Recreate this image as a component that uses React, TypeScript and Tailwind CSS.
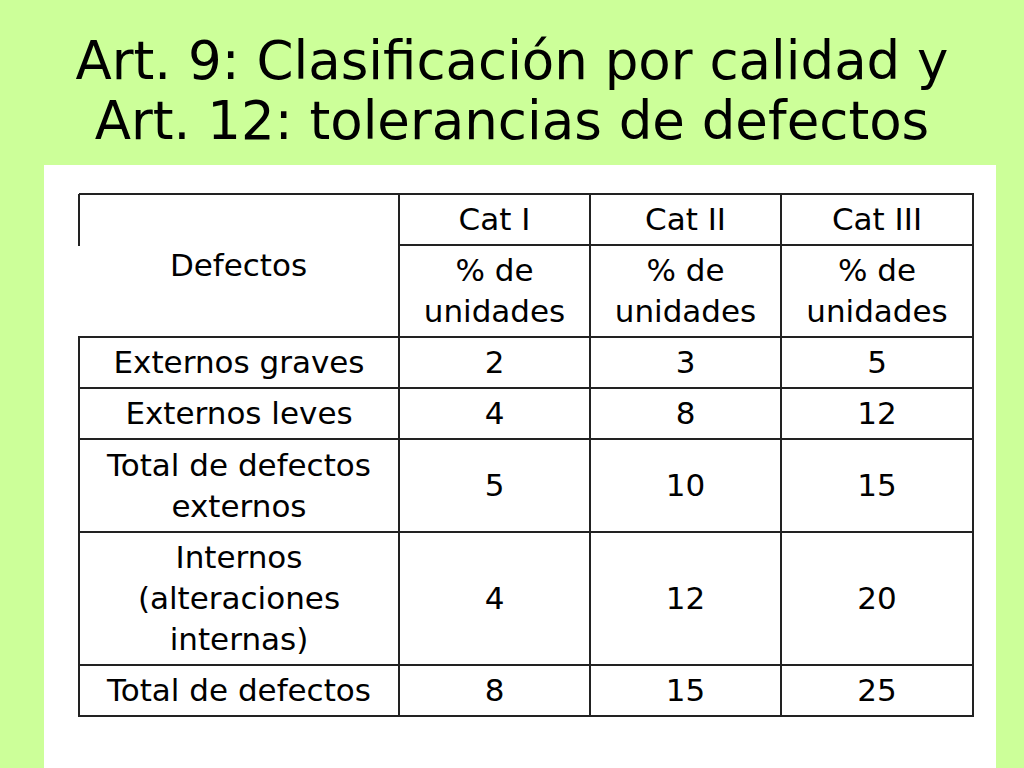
const rows = [
  { label: ["Externos graves"], values: ["2", "3", "5"], h: "h-[51px]" },
  { label: ["Externos leves"], values: ["4", "8", "12"], h: "h-[51px]" },
  { label: ["Total de defectos", "externos"], values: ["5", "10", "15"], h: "h-[93px]" },
  { label: ["Internos", "(alteraciones", "internas)"], values: ["4", "12", "20"], h: "h-[133px]" },
  { label: ["Total de defectos"], values: ["8", "15", "25"], h: "h-[51px]" },
];

const cell = "border-2 border-[#222] text-center align-middle p-0";

export default function App() {
  return (
    <div
      className="flex h-[768px] w-[1024px] flex-col bg-[#ccff99] text-black"
      style={{ fontFamily: '"DejaVu Sans", sans-serif' }}
    >
      <h1 className="flex h-[165px] flex-col items-center pt-[31px] text-[53px] leading-[60px]">
        <span>Art. 9: Clasificación por calidad y</span>
        <span>Art. 12: tolerancias de defectos</span>
      </h1>

      <div className="ml-[44px] w-[952px] flex-1 bg-white pl-[34px] pt-[28px]">
        <table className="w-[894px] table-fixed border-collapse text-[31px] leading-[41px]">
          <colgroup>
            <col className="w-[320px]" />
            <col className="w-[191px]" />
            <col className="w-[191px]" />
            <col className="w-[192px]" />
          </colgroup>
          <tbody>
            <tr className="h-[51px]">
              <td
                rowSpan={2}
                className="relative border-2 border-l-0 border-[#222] p-0 text-center align-middle"
              >
                <span className="absolute -left-[1px] -top-[1px] h-[52px] w-[2px] bg-[#222]" />
                Defectos
              </td>
              <td className={cell}>Cat I</td>
              <td className={cell}>Cat II</td>
              <td className={cell}>Cat III</td>
            </tr>
            <tr className="h-[92px]">
              {[0, 1, 2].map((i) => (
                <td key={i} className={cell}>
                  <div>% de</div>
                  <div>unidades</div>
                </td>
              ))}
            </tr>
            {rows.map((r) => (
              <tr key={r.label.join(" ")} className={r.h}>
                <td className={cell}>
                  {r.label.map((l) => (
                    <div key={l}>{l}</div>
                  ))}
                </td>
                {r.values.map((v, i) => (
                  <td key={i} className={cell}>
                    {v}
                  </td>
                ))}
              </tr>
            ))}
          </tbody>
        </table>
      </div>
    </div>
  );
}
